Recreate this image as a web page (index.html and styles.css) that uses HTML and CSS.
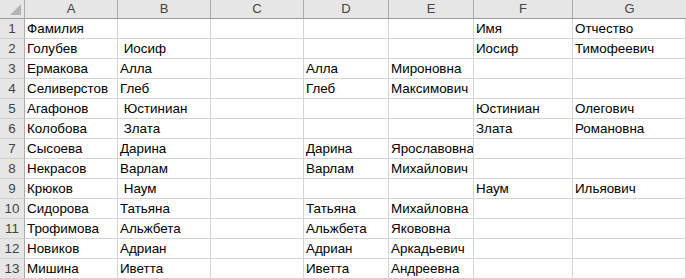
FILE: index.html
```html
<!DOCTYPE html>
<html lang="ru">
<head>
<meta charset="utf-8">
<link rel="stylesheet" href="styles.css">
</head>
<body>
<div class="sheet">
  <div class="corner"><span class="tri"></span></div>
  <div class="ch">A</div><div class="ch">B</div><div class="ch">C</div><div class="ch">D</div><div class="ch">E</div><div class="ch">F</div><div class="ch last">G</div>

  <div class="rh">1</div><div class="c">Фамилия</div><div class="c"></div><div class="c"></div><div class="c"></div><div class="c"></div><div class="c">Имя</div><div class="c">Отчество</div>
  <div class="rh">2</div><div class="c">Голубев</div><div class="c">&nbsp;Иосиф</div><div class="c"></div><div class="c"></div><div class="c"></div><div class="c">Иосиф</div><div class="c">Тимофеевич</div>
  <div class="rh">3</div><div class="c">Ермакова</div><div class="c">Алла</div><div class="c"></div><div class="c">Алла</div><div class="c">Мироновна</div><div class="c"></div><div class="c"></div>
  <div class="rh">4</div><div class="c">Селиверстов</div><div class="c">Глеб</div><div class="c"></div><div class="c">Глеб</div><div class="c">Максимович</div><div class="c"></div><div class="c"></div>
  <div class="rh">5</div><div class="c">Агафонов</div><div class="c">&nbsp;Юстиниан</div><div class="c"></div><div class="c"></div><div class="c"></div><div class="c">Юстиниан</div><div class="c">Олегович</div>
  <div class="rh">6</div><div class="c">Колобова</div><div class="c">&nbsp;Злата</div><div class="c"></div><div class="c"></div><div class="c"></div><div class="c">Злата</div><div class="c">Романовна</div>
  <div class="rh">7</div><div class="c">Сысоева</div><div class="c">Дарина</div><div class="c"></div><div class="c">Дарина</div><div class="c">Ярославовна</div><div class="c"></div><div class="c"></div>
  <div class="rh">8</div><div class="c">Некрасов</div><div class="c">Варлам</div><div class="c"></div><div class="c">Варлам</div><div class="c">Михайлович</div><div class="c"></div><div class="c"></div>
  <div class="rh">9</div><div class="c">Крюков</div><div class="c">&nbsp;Наум</div><div class="c"></div><div class="c"></div><div class="c"></div><div class="c">Наум</div><div class="c">Ильяович</div>
  <div class="rh">10</div><div class="c">Сидорова</div><div class="c">Татьяна</div><div class="c"></div><div class="c">Татьяна</div><div class="c">Михайловна</div><div class="c"></div><div class="c"></div>
  <div class="rh">11</div><div class="c">Трофимова</div><div class="c">Альжбета</div><div class="c"></div><div class="c">Альжбета</div><div class="c">Якововна</div><div class="c"></div><div class="c"></div>
  <div class="rh">12</div><div class="c">Новиков</div><div class="c">Адриан</div><div class="c"></div><div class="c">Адриан</div><div class="c">Аркадьевич</div><div class="c"></div><div class="c"></div>
  <div class="rh">13</div><div class="c">Мишина</div><div class="c">Иветта</div><div class="c"></div><div class="c">Иветта</div><div class="c">Андреевна</div><div class="c"></div><div class="c"></div>
</div>
</body>
</html>
```

FILE: styles.css
```css
html, body {
  margin: 0;
  padding: 0;
  background: #ffffff;
}
.sheet {
  display: grid;
  grid-template-columns: 25px 93px 93px 93px 85px 85px 99px 1fr;
  grid-template-rows: 19px repeat(13, 20px);
  width: 686px;
  font-family: "Liberation Sans", Arial, sans-serif;
  font-size: 13.4px;
  color: #000000;
  overflow: hidden;
}
.sheet > div {
  box-sizing: border-box;
  white-space: pre;
  overflow: hidden;
}
.corner {
  background: #e6e6e6;
  border-right: 1px solid #ababab;
  border-bottom: 1px solid #9b9b9b;
  position: relative;
}
.tri {
  position: absolute;
  right: 3px;
  bottom: 3px;
  width: 0;
  height: 0;
  border-left: 11px solid transparent;
  border-bottom: 11px solid #b5b5b5;
}
.ch {
  background: #e6e6e6;
  border-right: 1px solid #ababab;
  border-bottom: 1px solid #9b9b9b;
  text-align: center;
  color: #444444;
  font-size: 13px;
  line-height: 18px;
}
.ch.last {
  border-right: none;
}
.rh {
  background: #e6e6e6;
  border-right: 1px solid #ababab;
  border-bottom: 1px solid #d0d0d0;
  text-align: center;
  color: #444444;
  padding-top: 1px;
  line-height: 18px;
}
.c {
  border-right: 1px solid #d4d4d4;
  border-bottom: 1px solid #d4d4d4;
  padding-left: 2px;
  padding-top: 1px;
  line-height: 18px;
}
```
